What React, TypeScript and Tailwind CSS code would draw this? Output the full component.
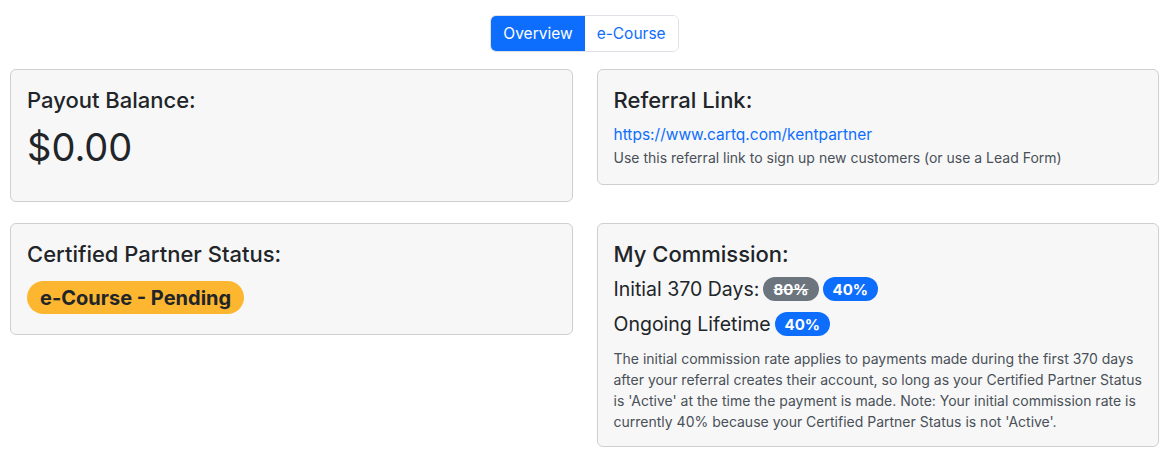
import React from 'react';

const font = { fontFamily: 'Inter, "Noto Sans", sans-serif' };

const Card = ({ children, bottom = 'pb-4' }: { children: React.ReactNode; bottom?: string }) => (
  <div className={`rounded-[6px] border border-[#cfcfcf] bg-[#f7f7f7] px-4 pt-4 ${bottom}`}>{children}</div>
);

const Title = ({ children }: { children: React.ReactNode }) => (
  <h4 className="mb-2 text-[22px] font-medium leading-[29px] text-[#212529]">{children}</h4>
);

const Pill = ({ children, tone, strike }: { children: React.ReactNode; tone: 'blue' | 'gray'; strike?: boolean }) => (
  <span
    className={`inline-flex h-[24px] items-center rounded-full px-[10px] text-[15px] font-bold leading-none text-white ${
      tone === 'blue' ? 'bg-[#0d6efd]' : 'bg-[#6c757d]'
    } ${strike ? 'line-through' : ''}`}
  >
    {children}
  </span>
);

export default function App() {
  return (
    <div className="min-h-[460px] bg-white px-[10px] pt-[15px]" style={font}>
      <div className="flex justify-center">
        <div className="flex h-[37px] overflow-hidden rounded-[6px] border border-[#dee2e6] text-[15.5px]">
          <button className="bg-[#0d6efd] px-3 text-white">Overview</button>
          <button className="bg-white px-3 text-[#0d6efd]">e-Course</button>
        </div>
      </div>

      <div className="mt-[17px] grid grid-cols-2 items-start gap-x-6 gap-y-[21px]">
        <Card>
          <Title>Payout Balance:</Title>
          <div className="mb-[14px] text-[38px] font-normal leading-[48px] text-[#212529]">$0.00</div>
        </Card>

        <Card>
          <Title>Referral Link:</Title>
          <a href="#" className="block text-[15.5px] leading-6 text-[#0d6efd]">
            https://www.cartq.com/kentpartner
          </a>
          <p className="text-[14px] leading-[21px] text-[#495057]">
            Use this referral link to sign up new customers (or use a Lead Form)
          </p>
        </Card>

        <Card bottom="pb-[20px]">
          <Title>Certified Partner Status:</Title>
          <div className="mt-[12px] flex">
            <span className="inline-flex h-[33px] items-center rounded-full bg-[#fdb62f] px-[13px] text-[20px] font-bold leading-none text-[#212529]">
              e-Course - Pending
            </span>
          </div>
        </Card>

        <Card bottom="pb-[14px]">
          <Title>My Commission:</Title>
          <div className="flex items-center gap-1 text-[19.5px] leading-6 text-[#212529]">
            <span>Initial 370 Days:</span>
            <Pill tone="gray" strike>
              80%
            </Pill>
            <Pill tone="blue">40%</Pill>
          </div>
          <div className="mt-[11px] flex items-center gap-1 text-[19.5px] leading-6 text-[#212529]">
            <span>Ongoing Lifetime</span>
            <Pill tone="blue">40%</Pill>
          </div>
          <p className="mt-[12px] text-[14px] leading-[21px] text-[#495057]">
            The initial commission rate applies to payments made during the first 370 days after your referral creates
            their account, so long as your Certified Partner Status is 'Active' at the time the payment is made. Note:
            Your initial commission rate is currently 40% because your Certified Partner Status is not 'Active'.
          </p>
        </Card>
      </div>
    </div>
  );
}
